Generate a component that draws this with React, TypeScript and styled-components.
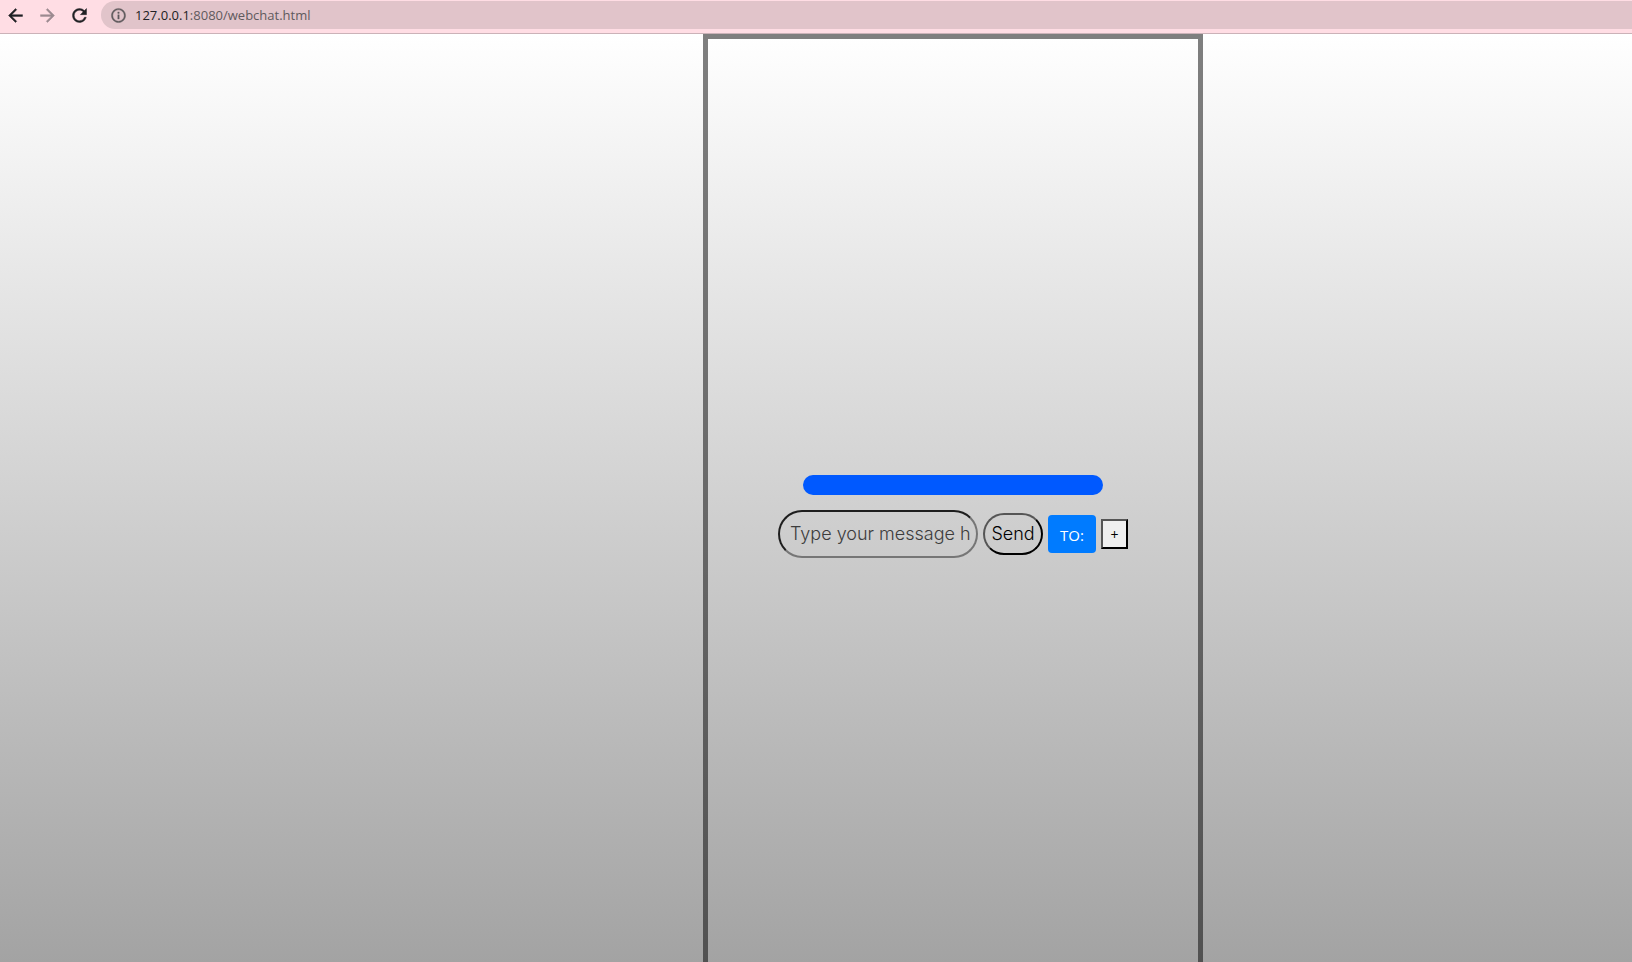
import React, { useState } from "react";
import styled, { createGlobalStyle } from "styled-components";
import { MdArrowBack, MdArrowForward, MdRefresh, MdInfoOutline } from "react-icons/md";

const GlobalStyle = createGlobalStyle`
  *, *::before, *::after { box-sizing: border-box; }
  html, body, #root { height: 100%; }
  body { margin: 0; overflow: hidden; font-family: "Open Sans", "Noto Sans", sans-serif; }
`;

const Browser = styled.div`
  display: flex;
  flex-direction: column;
  height: 100%;
`;

const Toolbar = styled.header`
  display: flex;
  align-items: flex-start;
  flex: none;
  height: 34px;
  padding: 1px 0 0 4px;
  background: #ffdde4;
  border-bottom: 1px solid #cbb2b8;
`;

const Navigation = styled.nav`
  display: flex;
  gap: 10px;
  margin-right: 11px;
`;

const NavButton = styled.button`
  display: flex;
  align-items: center;
  justify-content: center;
  width: 22px;
  height: 28px;
  padding: 0;
  border: 0;
  background: none;
  color: #202124;
  font-size: 21px;

  path:not([fill="none"]) { stroke: currentColor; stroke-width: 0.5px; }
  &:disabled { color: #9c8a90; }
`;

const AddressBar = styled.div`
  display: flex;
  align-items: center;
  flex: 1;
  gap: 8px;
  height: 28px;
  padding-left: 9px;
  border-radius: 14px 0 0 14px;
  background: #e1c4ca;
  color: #5f5a5d;
  font-size: 17px;

  path:not([fill="none"]) { stroke: currentColor; stroke-width: 0.5px; }
`;

const Address = styled.span`
  font-size: 13px;
  line-height: 20px;
`;

const Host = styled.span`
  color: #202124;
`;

const Page = styled.main`
  display: grid;
  grid-template-columns: 703fr 500px 429fr;
  flex: 1;
  background: linear-gradient(#ffffff, #a3a3a3);
`;

const ChatPanel = styled.section`
  display: flex;
  flex-direction: column;
  align-items: center;
  grid-column: 2;
  gap: 15px;
  padding-top: 436px;
  border: 5px solid rgba(0, 0, 0, 0.5);
  border-bottom: 0;
`;

const MessageBar = styled.div`
  width: 300px;
  height: 20px;
  border-radius: 10px;
  background: #0059ff;
`;

const Composer = styled.form`
  display: flex;
  align-items: center;
  gap: 5px;
`;

const MessageInput = styled.input`
  width: 200px;
  height: 48px;
  padding: 0 6px 2px 10px;
  border: 2px solid;
  border-color: #1e1e1e #767676 #767676 #1e1e1e;
  border-radius: 24px;
  background: transparent;
  font-family: Inter, sans-serif;
  font-size: 18px;
  font-weight: 300;

  &::placeholder { color: #3c3c3c; opacity: 1; }
`;

const SendButton = styled.button`
  width: 60px;
  height: 42px;
  padding: 0 0 2px;
  border: 2px solid;
  border-color: #555555 #000000 #000000 #555555;
  border-radius: 21px;
  background: transparent;
  color: #000000;
  font-family: Inter, sans-serif;
  font-size: 18px;
  font-weight: 300;
`;

const RecipientButton = styled.button`
  width: 48px;
  height: 38px;
  padding: 2px 0 0;
  border: 0;
  border-radius: 4px;
  background: #007bff;
  color: #ffffff;
  font-family: "Open Sans", "Noto Sans", sans-serif;
  font-size: 15px;
`;

const AddButton = styled.button`
  width: 27px;
  height: 30px;
  padding: 0;
  border: 2px solid;
  border-color: #555555 #000000 #000000 #555555;
  background: #efefef;
  color: #000000;
  font-family: "Open Sans", "Noto Sans", sans-serif;
  font-size: 14px;
`;

export default function App() {
  const [message, setMessage] = useState("");

  return (
    <Browser>
      <GlobalStyle />
      <Toolbar>
        <Navigation>
          <NavButton aria-label="Back"><MdArrowBack /></NavButton>
          <NavButton aria-label="Forward" disabled><MdArrowForward /></NavButton>
          <NavButton aria-label="Reload"><MdRefresh /></NavButton>
        </Navigation>
        <AddressBar>
          <MdInfoOutline />
          <Address><Host>127.0.0.1</Host>:8080/webchat.html</Address>
        </AddressBar>
      </Toolbar>
      <Page>
        <ChatPanel>
          <MessageBar />
          <Composer onSubmit={(event) => event.preventDefault()}>
            <MessageInput
              aria-label="Message"
              placeholder="Type your message here"
              value={message}
              onChange={(event) => setMessage(event.target.value)}
            />
            <SendButton type="submit">Send</SendButton>
            <RecipientButton type="button">TO:</RecipientButton>
            <AddButton type="button" aria-label="Add recipient">+</AddButton>
          </Composer>
        </ChatPanel>
      </Page>
    </Browser>
  );
}
